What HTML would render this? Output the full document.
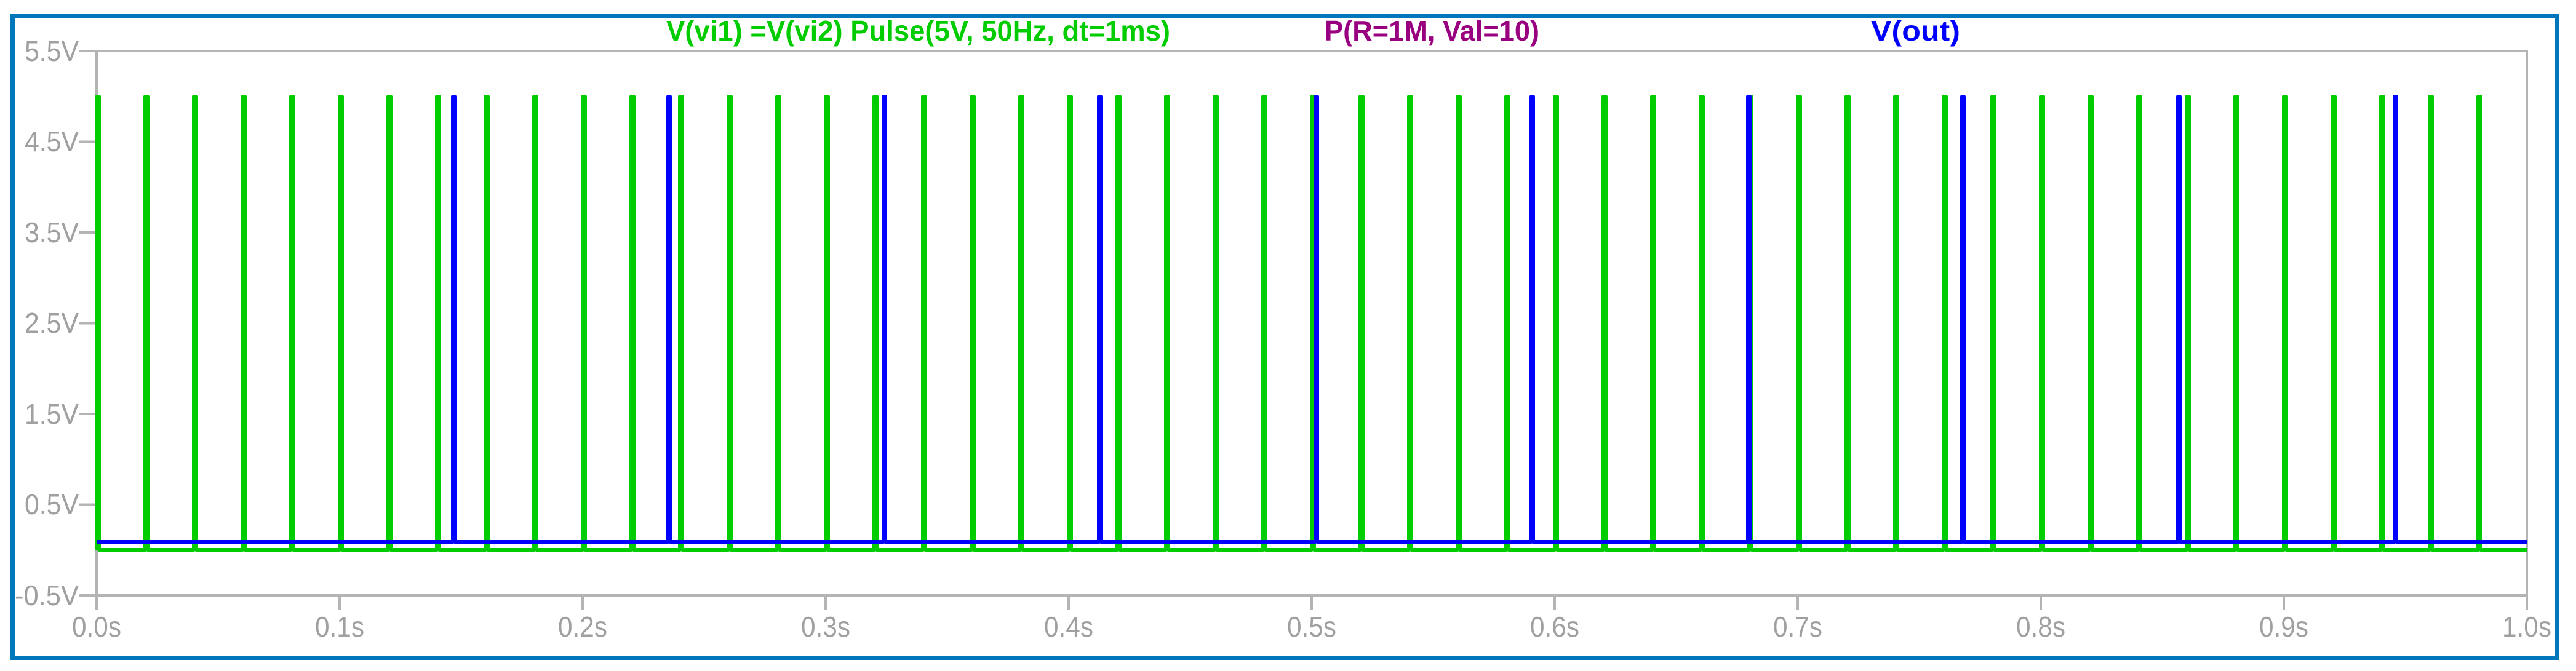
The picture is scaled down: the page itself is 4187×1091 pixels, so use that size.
<!DOCTYPE html>
<html><head><meta charset="utf-8"><style>html,body{margin:0;padding:0;background:#fff;}svg{display:block}</style></head>
<body>
<svg width="4187" height="1091" viewBox="0 0 4187 1091" xmlns="http://www.w3.org/2000/svg">
<rect width="4187" height="1091" fill="#fff"/>
<rect x="20.5" y="25.5" width="4136" height="1044" fill="none" stroke="#0077bb" stroke-width="7"/>
<g font-family="Liberation Sans, sans-serif" font-weight="bold" font-size="46">
<text x="1083" y="66" textLength="819" lengthAdjust="spacingAndGlyphs" fill="#00cc00">V(vi1) =V(vi2) Pulse(5V,  50Hz, dt=1ms)</text>
<text x="2153" y="66" textLength="349" lengthAdjust="spacingAndGlyphs" fill="#990080">P(R=1M, Val=10)</text>
<text x="3041" y="66" textLength="145" lengthAdjust="spacingAndGlyphs" fill="#0000ff">V(out)</text>
</g>
<g stroke="#b4b4b4" stroke-width="4" fill="none">
<rect x="157" y="83" width="3950" height="885"/>
<path d="M128,83h29M128,230.5h29M128,378h29M128,525.5h29M128,673h29M128,820.5h29M128,968h29"/>
<path d="M157,968v24M552,968v24M947,968v24M1342,968v24M1737,968v24M2132,968v24M2527,968v24M2922,968v24M3317,968v24M3712,968v24M4107,968v24"/>
</g>
<g font-family="Liberation Sans, sans-serif" font-size="46" fill="#a0a0a0" text-anchor="end">
<text x="128" y="99" textLength="88" lengthAdjust="spacingAndGlyphs">5.5V</text>
<text x="128" y="246" textLength="88" lengthAdjust="spacingAndGlyphs">4.5V</text>
<text x="128" y="394" textLength="88" lengthAdjust="spacingAndGlyphs">3.5V</text>
<text x="128" y="541" textLength="88" lengthAdjust="spacingAndGlyphs">2.5V</text>
<text x="128" y="689" textLength="88" lengthAdjust="spacingAndGlyphs">1.5V</text>
<text x="128" y="836" textLength="88" lengthAdjust="spacingAndGlyphs">0.5V</text>
<text x="128" y="984" textLength="104" lengthAdjust="spacingAndGlyphs">-0.5V</text>
</g>
<g font-family="Liberation Sans, sans-serif" font-size="46" fill="#a0a0a0" text-anchor="middle">
<text x="157" y="1035" textLength="80" lengthAdjust="spacingAndGlyphs">0.0s</text>
<text x="552" y="1035" textLength="80" lengthAdjust="spacingAndGlyphs">0.1s</text>
<text x="947" y="1035" textLength="80" lengthAdjust="spacingAndGlyphs">0.2s</text>
<text x="1342" y="1035" textLength="80" lengthAdjust="spacingAndGlyphs">0.3s</text>
<text x="1737" y="1035" textLength="80" lengthAdjust="spacingAndGlyphs">0.4s</text>
<text x="2132" y="1035" textLength="80" lengthAdjust="spacingAndGlyphs">0.5s</text>
<text x="2527" y="1035" textLength="80" lengthAdjust="spacingAndGlyphs">0.6s</text>
<text x="2922" y="1035" textLength="80" lengthAdjust="spacingAndGlyphs">0.7s</text>
<text x="3317" y="1035" textLength="80" lengthAdjust="spacingAndGlyphs">0.8s</text>
<text x="3712" y="1035" textLength="80" lengthAdjust="spacingAndGlyphs">0.9s</text>
<text x="4107" y="1035" textLength="80" lengthAdjust="spacingAndGlyphs">1.0s</text>
</g>
<path fill="none" stroke="#00cc00" stroke-width="6" stroke-linejoin="round" d="M157,894V157h4V894
h75V157h4V894h75V157h4V894h75V157h4V894h75V157h4V894h75V157h4V894h75V157h4V894h75V157h4V894
h75V157h4V894h75V157h4V894h75V157h4V894h75V157h4V894h75V157h4V894h75V157h4V894h75V157h4V894
h75V157h4V894h75V157h4V894h75V157h4V894h75V157h4V894h75V157h4V894h75V157h4V894h75V157h4V894
h75V157h4V894h75V157h4V894h75V157h4V894h75V157h4V894h75V157h4V894h75V157h4V894h75V157h4V894
h75V157h4V894h75V157h4V894h75V157h4V894h75V157h4V894h75V157h4V894h75V157h4V894h75V157h4V894
h75V157h4V894h75V157h4V894h75V157h4V894h75V157h4V894h75V157h4V894h75V157h4V894h75V157h4V894
h75V157h4V894h75V157h4V894h75V157h4V894h75V157h4V894h75V157h4V894h75V157h4V894h75V157h4V894
H4107"/>
<path fill="none" stroke="#0000ff" stroke-width="6" stroke-linejoin="round" d="M157,881H736V157h3V881
H1086V157h3V881H1436V157h3V881H1786V157h3V881H2138V157h3V881H2489V157h3V881H2841V157h3V881H3189V157h3V881H3540V157h3V881H3892V157h3V881H4107"/>
</svg>
</body></html>
